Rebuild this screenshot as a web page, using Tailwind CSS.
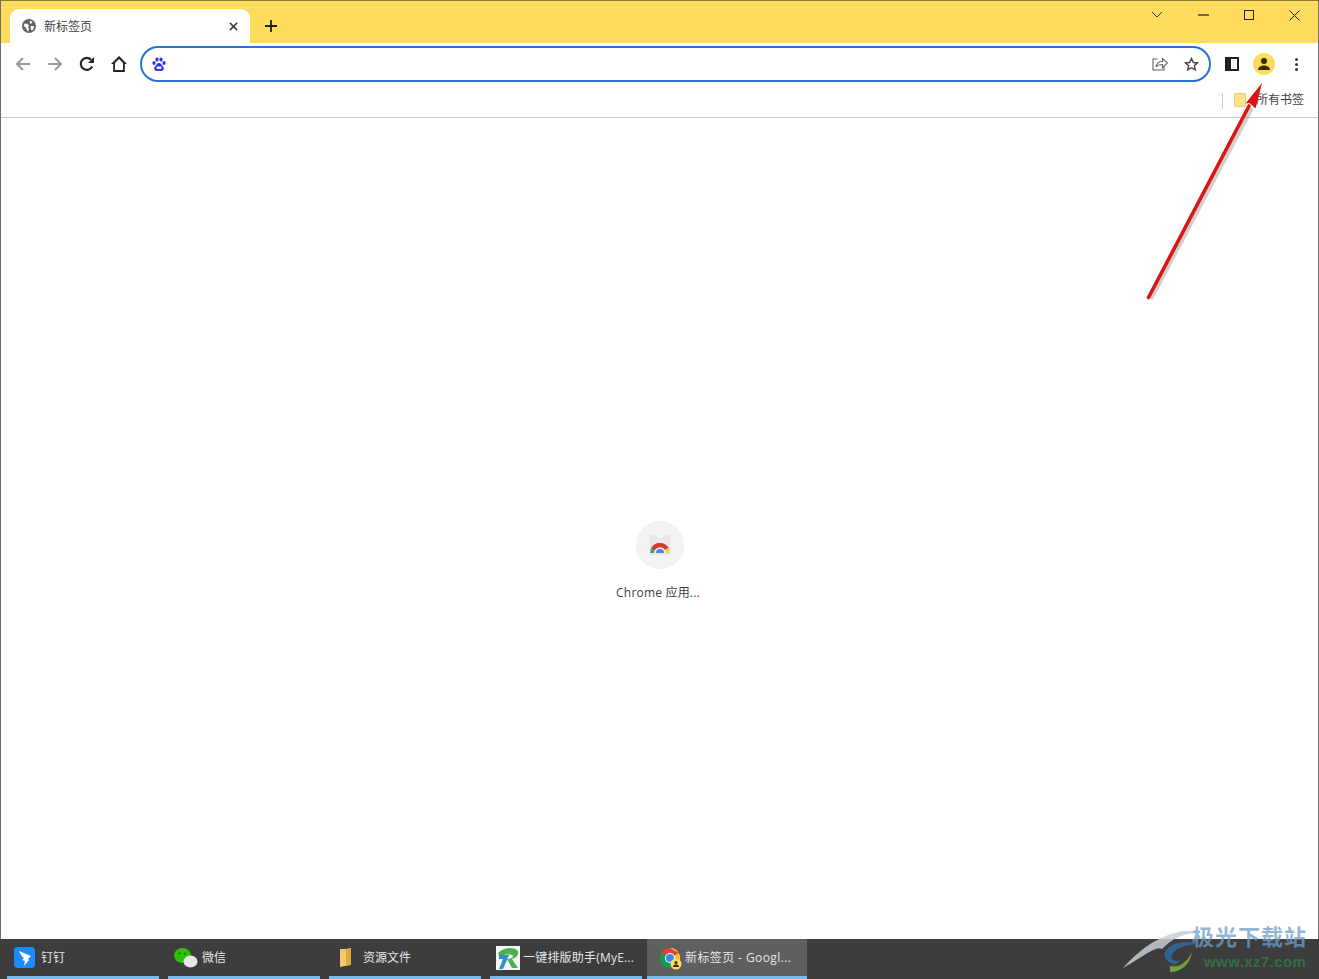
<!DOCTYPE html>
<html lang="zh-CN">
<head>
    <meta charset="UTF-8">
    <title>新标签页</title>
    <script src="https://cdn.jsdelivr.net/npm/@tailwindcss/browser@4"></script>
</head>
<body class="bg-white overflow-hidden font-['Open_Sans','Noto_Sans_CJK_SC',sans-serif]">
<div class="relative w-[1319px] h-[979px] flex flex-col overflow-hidden">

    <!-- browser window -->
    <div class="h-[939px] flex flex-col border-l border-r border-[#6e6e6e]">
        <!-- tab strip -->
        <div class="h-[43px] shrink-0 bg-[#ffdc5d] border-t border-[#8a7a3a] flex items-end relative">
            <div class="w-[240px] h-[34px] ml-[9px] bg-white rounded-t-[9px] flex items-center pl-[12px] pr-[12px]">
                <svg class="w-[14px] h-[14px] shrink-0" viewBox="0 0 16 16"><circle cx="8" cy="8" r="8" fill="#5f6368"/><path d="M3 5l3 .5 2 2-1 2 1 2-1 3-2-3-1-2-2-1.500zM9 2l3 1-1 2-2 0zM10 8l3 0 1 1-2 4-2-1z" fill="#fff"/></svg>
                <span class="ml-[8px] pt-[1px] text-[12px] text-[#3c4043] flex-1">新标签页</span>
                <svg class="w-[9px] h-[9px]" viewBox="0 0 10 10"><path d="M1 1l8 8M9 1l-8 8" stroke="#3c4043" stroke-width="1.700" fill="none"/></svg>
            </div>
            <svg class="w-[12px] h-[12px] ml-[15px] mb-[11px]" viewBox="0 0 12 12"><path d="M6 0v12M0 6h12" stroke="#1f1f1f" stroke-width="1.800"/></svg>
            <!-- window controls -->
            <div class="ml-auto self-start flex items-center h-[28px] text-[#222]">
                <svg class="w-[12px] h-[8px] mr-[35px]" viewBox="0 0 12 8"><path d="M1 1l5 5 5-5" stroke="#333" stroke-width="1" fill="none"/></svg>
                <svg class="w-[11px] h-[2px] mr-[35px]" viewBox="0 0 11 2"><path d="M0 1h11" stroke="#222" stroke-width="1.200"/></svg>
                <svg class="w-[10px] h-[10px] mr-[35px]" viewBox="0 0 10 10"><rect x=".5" y=".5" width="9" height="9" fill="none" stroke="#222" stroke-width="1"/></svg>
                <svg class="w-[11px] h-[11px] mr-[18px]" viewBox="0 0 11 11"><path d="M.5.5l10 10M10.500.5l-10 10" stroke="#222" stroke-width="1"/></svg>
            </div>
        </div>

        <!-- toolbar -->
        <div class="h-[42px] shrink-0 bg-white flex items-center">
            <svg class="w-4 h-4 ml-[14px]" viewBox="0 0 16 16"><path d="M15 8H2M8 2L2 8l6 6" stroke="#9b9b9b" stroke-width="2" fill="none"/></svg>
            <svg class="w-4 h-4 ml-[16px]" viewBox="0 0 16 16"><path d="M1 8h13M8 2l6 6-6 6" stroke="#9b9b9b" stroke-width="2" fill="none"/></svg>
            <svg class="w-4 h-4 ml-[16px]" viewBox="0 0 16 16"><path d="M13.200 10.500A6 6 0 1 1 12.200 3.800" stroke="#222" stroke-width="2.100" fill="none"/><path d="M15 1v6H9z" fill="#222"/></svg>
            <svg class="w-4 h-4 ml-[16px]" viewBox="0 0 16 16"><path d="M8 0L0 8h2.200v8h11.600V8H16zM4 14V7l4-4 4 4v7z" fill="#222" fill-rule="evenodd"/></svg>
            <div class="w-[1071px] h-[36px] ml-[13px] rounded-full border-2 border-[#2a72d0] flex items-center pl-[10px] pr-[10px]">
                <svg class="w-[14px] h-[15px] shrink-0" viewBox="0 0 14 15" fill="#2932e1"><ellipse cx="2" cy="6" rx="1.600" ry="2"/><ellipse cx="5" cy="2.600" rx="1.600" ry="2.100"/><ellipse cx="9" cy="2.600" rx="1.600" ry="2.100"/><ellipse cx="12" cy="6" rx="1.600" ry="2"/><path d="M7 6c-2 0-2.500 2-4 3.500S2 14 5 14c1 0 1.200-.3 2-.3s1 .3 2 .3c3 0 3.500-3 2-4.500S9 6 7 6z"/><rect x="4.500" y="9.500" width="5" height="2.600" rx="1" fill="#fff"/></svg>
                <svg class="w-[16px] h-[14px] ml-auto" viewBox="0 0 16 14"><path d="M5.500 2H1v11h11V9M4 10c.5-3.500 3-5.500 6.500-5.500V1.500L15.500 6l-5 4.500V7.500C8 7.500 5.500 8 4 10z" stroke="#5f6368" stroke-width="1.100" fill="none"/></svg>
                <svg class="w-[15px] h-[15px] ml-[16px]" viewBox="0 0 15 15"><path d="M7.500 1.500l1.800 4 4.200.4-3.200 2.800 1 4.200-3.800-2.200-3.800 2.200 1-4.200L1.500 5.900l4.200-.4z" stroke="#444" stroke-width="1.400" fill="none"/></svg>
            </div>
            <svg class="w-[14px] h-[14px] ml-[14px]" viewBox="0 0 14 14"><rect width="14" height="14" fill="#222"/><rect x="6" y="2" width="6" height="10" fill="#fff"/></svg>
            <div class="w-[22px] h-[22px] ml-[14px] rounded-full bg-[#fddb5f] flex items-center justify-center">
                <svg class="w-[14px] h-[14px]" viewBox="0 0 14 14" fill="#3a2f0b"><circle cx="7" cy="4" r="3"/><path d="M1 13c0-3 3-4.500 6-4.500s6 1.500 6 4.500z"/></svg>
            </div>
            <div class="ml-[20px] flex flex-col gap-[2px]">
                <span class="w-[3px] h-[3px] rounded-full bg-[#333]"></span>
                <span class="w-[3px] h-[3px] rounded-full bg-[#333]"></span>
                <span class="w-[3px] h-[3px] rounded-full bg-[#333]"></span>
            </div>
        </div>

        <!-- bookmarks bar -->
        <div class="h-[33px] shrink-0 bg-white border-b border-[#c8c8c8] flex items-center justify-end pr-[13px]">
            <div class="w-px h-[16px] bg-[#c8c8c8] mr-[11px]"></div>
            <div class="w-[12px] h-[14px] bg-[#fbe38e] border border-[#eccf73] rounded-[1px] mr-[10px] -mt-[2px]"></div>
            <span class="text-[12px] leading-[16px] -mt-[2px] text-[#3c4043] w-[49px] whitespace-nowrap">所有书签</span>
        </div>

        <!-- new tab content -->
        <div class="flex-1 bg-white flex flex-col items-center pt-[403px]">
            <div class="w-[48px] h-[48px] rounded-full bg-[#f1f3f4] flex items-center justify-center">
                <svg class="w-[24px] h-[24px]" viewBox="0 0 24 24">
                    <rect x="2" y="2" width="20" height="20" fill="#e8e8e8"/>
                    <rect x="9" y="2" width="6" height="3" fill="#f6f6f6"/>
                    <path d="M2 20a10 10 0 0 1 10-10v4a6 6 0 0 0-6 6z" fill="#3aa757"/>
                    <path d="M3.300 15A10 10 0 0 1 20.700 15L17 17A6 6 0 0 0 7 17z" fill="#d93a30"/>
                    <path d="M22 20a10 10 0 0 0-1.300-5L17 17a6 6 0 0 1 1 3z" fill="#fbcf3f"/>
                    <path d="M8 20a4 4 0 0 1 8 0z" fill="#4a86e8"/>
                </svg>
            </div>
            <span class="mt-[15px] -ml-[3px] text-[12px] leading-[18px] tracking-[.2px] text-[#3c4043]">Chrome 应用...</span>
        </div>
    </div>

    <!-- windows taskbar -->
    <div class="h-[40px] bg-[#3d3d3d] flex text-[12px] text-[#e6e6e6] pl-[7px] gap-[9px]">
        <div class="w-[152px] border-b-[3px] border-[#76b9ed] flex items-center pl-[7px] gap-[6px]">
            <div class="w-[21px] h-[21px] rounded-[4px] bg-[#1a8cff] flex items-center justify-center">
                <svg class="w-[14px] h-[16px]" viewBox="0 0 14 16"><path d="M1 1l12 5-3 3 1 1-5 6 1-5-3-1 2-2C4 7 2 4 1 1z" fill="#fff"/></svg>
            </div>
            <span class="pt-[1px]">钉钉</span>
        </div>
        <div class="w-[152px] border-b-[3px] border-[#76b9ed] flex items-center pl-[5px] gap-[3px]">
            <svg class="w-[26px] h-[24px]" viewBox="0 0 26 24"><ellipse cx="9.500" cy="9.500" rx="8.500" ry="7.500" fill="#2dc100"/><ellipse cx="17.500" cy="15.500" rx="7" ry="6" fill="#e6e6e6"/><circle cx="6.500" cy="7.500" r="1.100" fill="#1a6b00"/><circle cx="12" cy="7.500" r="1.100" fill="#1a6b00"/></svg>
            <span class="pt-[1px]">微信</span>
        </div>
        <div class="w-[152px] border-b-[3px] border-[#76b9ed] flex items-center pl-[9px] gap-[11px]">
            <svg class="w-[14px] h-[20px]" viewBox="0 0 14 20"><path d="M2 1h6l5-1v17l-6 1-5 1z" fill="#f2cb6b"/><path d="M8 1h5v16H8z" fill="#e0a93c"/></svg>
            <span class="pt-[1px]">资源文件</span>
        </div>
        <div class="w-[152px] border-b-[3px] border-[#76b9ed] flex items-center pl-[6px] gap-[3px]">
            <svg class="w-[24px] h-[24px]" viewBox="0 0 24 24"><rect width="24" height="24" fill="#f4f8f2"/><path d="M2 7c6-6 15-6 19-3 3 3 0 8-5 9l6 9h-6l-5-9c3 0 6-1 6-3s-8-2-14 0z" fill="#4cb050"/><path d="M3 9h10L7 23H3l4-10H3z" fill="#2c8fc9"/></svg>
            <span class="pt-[1px] tracking-[.2px] whitespace-nowrap">一键排版助手(MyE...</span>
        </div>
        <div class="w-[160px] -ml-[4px] bg-[#5f5f5f] border-b-[3px] border-[#76b9ed] flex items-center pl-[11px] gap-[3px]">
            <svg class="w-[24px] h-[24px]" viewBox="0 0 24 24">
                <path d="M12 12L3.300 7A10 10 0 0 1 20.700 7z" fill="#db4437"/>
                <path d="M12 2a10 10 0 0 1 8.700 15L12 12l8.700-5z" fill="#fbc02d"/>
                <path d="M3.300 7A10 10 0 0 0 12 22l8.700-5L12 12z" fill="#0f9d58"/>
                <circle cx="12" cy="12" r="5" fill="#fff"/>
                <circle cx="12" cy="12" r="4" fill="#4285f4"/>
                <circle cx="18" cy="18" r="5.500" fill="#fddb5f"/>
                <circle cx="18" cy="16.500" r="1.500" fill="#3a2f0b"/>
                <path d="M15 21c0-2 1.500-2.500 3-2.500s3 .5 3 2.500z" fill="#3a2f0b"/>
            </svg>
            <span class="pt-[1px] tracking-[.4px] whitespace-nowrap">新标签页 - Googl...</span>
        </div>
    </div>

    <!-- red annotation arrow -->
    <svg class="absolute left-[1140px] top-[78px] w-[130px] h-[225px]" viewBox="0 0 130 225">
        <path d="M11 221L112 30" stroke="#777" stroke-opacity=".35" stroke-width="4" fill="none"/>
        <path d="M8.500 219.500L109 28" stroke="#dc1515" stroke-width="3.600" stroke-linecap="round" fill="none"/>
        <path d="M122 5L105.500 25.500l4-.5 6 5.500z" fill="#e01010"/>
    </svg>

    <!-- watermark -->
    <div class="absolute left-[1122px] top-[926px] w-[190px] h-[50px]">
        <svg class="absolute left-0 top-0 w-[80px] h-[50px]" viewBox="0 0 80 50">
            <path d="M1 42C14 28 32 10 62 5c5 0 12 0 16 2-18 0-28 6-38 16-6-4-22 10-39 19z" fill="#c5cdd3" fill-opacity=".85"/>
            <path d="M44 24c8-8 20-10 31-6-7 1-18 2-23 8-5 6-2 11 6 8-5 6-18 14-6 4-8-2-12-8-8-14z" fill="#2d6ea3" fill-opacity=".8"/>
            <path d="M48 40c8 2 16-2 22-14-2 12-10 20-22 20z" fill="#7fb23c" fill-opacity=".85"/>
        </svg>
        <span class="absolute left-[70px] -top-[3px] text-[22px] leading-[26px] font-bold tracking-[1px] text-[#6f9cc6]/75 whitespace-nowrap">极光下载站</span>
        <span class="absolute left-[82px] top-[27px] font-['Liberation_Sans'] text-[15px] leading-[18px] font-bold tracking-[.4px] text-[#2f7d46]/80 whitespace-nowrap">www.xz7.com</span>
    </div>
</div>
</body>
</html>
